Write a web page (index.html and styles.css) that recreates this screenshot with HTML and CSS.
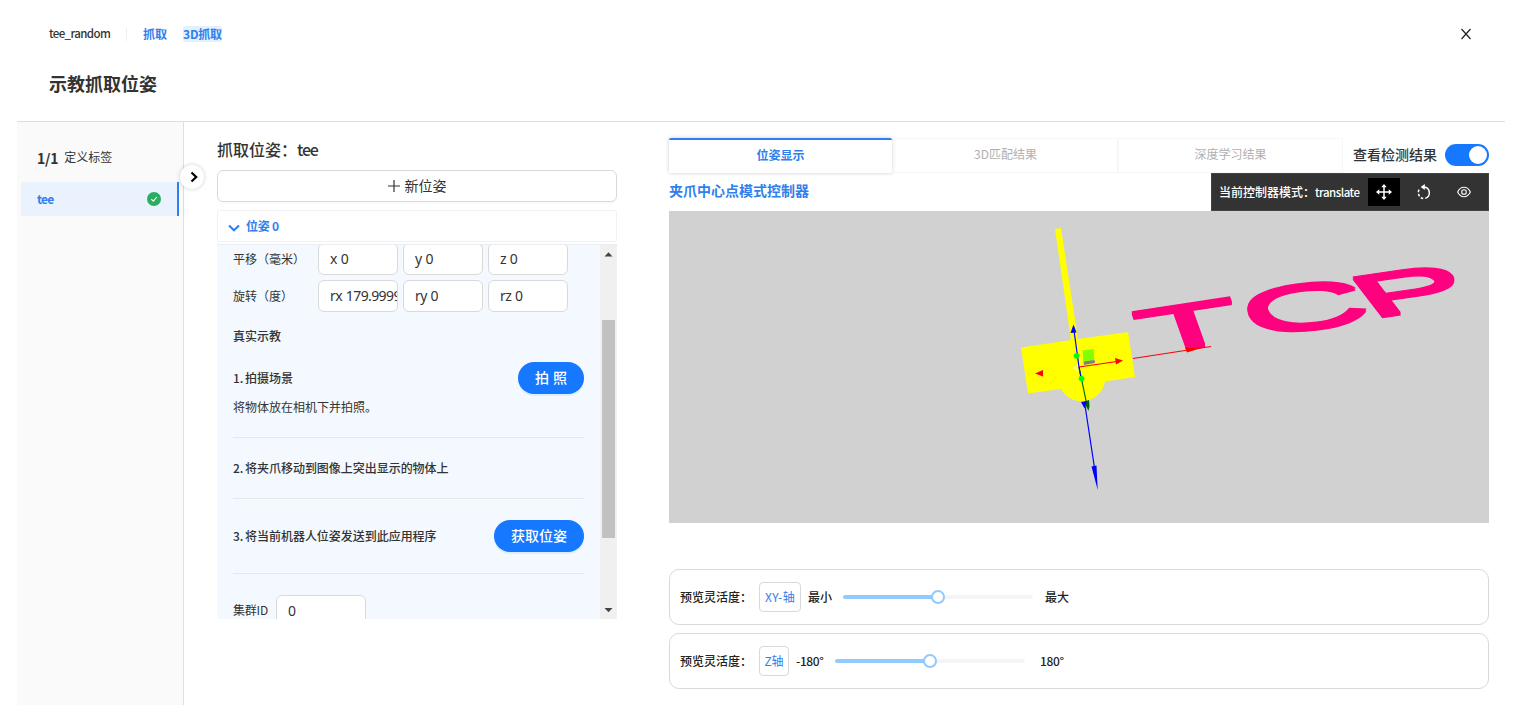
FILE: index.html
```html
<!DOCTYPE html>
<html lang="zh-CN">
<head>
<meta charset="utf-8">
<title>示教抓取位姿</title>
<link rel="stylesheet" href="styles.css">
</head>
<body>
<div class="page">
  <header class="header">
    <div class="crumbs">
      <span class="project">tee_random</span>
      <span class="crumb">抓取</span>
      <span class="crumb crumb-active">3D抓取</span>
      <svg class="close" viewBox="0 0 12 12"><path d="M1.5 1l9 10M10.5 1l-9 10"/></svg>
    </div>
    <h1 class="title">示教抓取位姿</h1>
  </header>
  <div class="body">
    <aside class="sidebar">
      <div class="step"><b>1/1</b><span>定义标签</span></div>
      <div class="label-item">
        <span>tee</span>
        <svg class="check" viewBox="0 0 14 14"><circle cx="7" cy="7" r="7"/><path d="M4.3 7.1l2 2 3.5-4"/></svg>
      </div>
      <div class="expander"><svg viewBox="0 0 10 12"><path d="M2.5 1.5L7.2 6 2.5 10.5"/></svg></div>
    </aside>

    <section class="poses">
      <h2 class="poses-title">抓取位姿：<span class="tag-name">tee</span></h2>
      <div class="new-pose"><svg viewBox="0 0 12 12"><path d="M6 0v12M0 6h12"/></svg><span>新位姿</span></div>
      <div class="pose-head"><svg viewBox="0 0 12 8"><path d="M1 1.5l5 4.8 5-4.8"/></svg><span>位姿 0</span></div>
      <div class="panel">
        <div class="panel-content">
          <div class="fields">
            <span class="field-name">平移（毫米）</span>
            <span class="input">x 0</span><span class="input">y 0</span><span class="input">z 0</span>
          </div>
          <div class="fields">
            <span class="field-name">旋转（度）</span>
            <span class="input">rx 179.9999</span><span class="input">ry 0</span><span class="input">rz 0</span>
          </div>
          <div class="section-title">真实示教</div>
          <div class="task task-one">
            <div class="task-row"><b>1. 拍摄场景</b><span class="pill pill-short">拍 照</span></div>
            <p class="hint">将物体放在相机下并拍照。</p>
          </div>
          <div class="task task-two"><b>2. 将夹爪移动到图像上突出显示的物体上</b></div>
          <div class="task task-three"><b>3. 将当前机器人位姿发送到此应用程序</b><span class="pill">获取位姿</span></div>
          <div class="cluster"><span class="cluster-name">集群ID</span><span class="input">0</span></div>
        </div>
        <div class="scrollbar">
          <svg viewBox="0 0 17 17"><path d="M4.5 11.5h8l-4-4.2z"/></svg>
          <div class="track"><div class="thumb"></div></div>
          <svg viewBox="0 0 17 17"><path d="M4.5 6h8l-4 4.2z"/></svg>
        </div>
      </div>
    </section>

    <section class="viewer">
      <div class="tabs">
        <div class="tab tab-active">位姿显示</div>
        <div class="tab">3D匹配结果</div>
        <div class="tab">深度学习结果</div>
        <span class="switch-label">查看检测结果</span>
        <span class="switch"></span>
      </div>
      <div class="mode-row">
        <span class="mode-title">夹爪中心点模式控制器</span>
        <div class="toolbar">
          <span class="mode-text">当前控制器模式：<span class="mode-name">translate</span></span>
          <span class="tool tool-active"><svg viewBox="0 0 16 16"><path d="M8 2v12M2 8h12"/><path class="fill" d="M8 0l2.7 3.3H5.3zM8 16l2.7-3.3H5.3zM0 8l3.3-2.7v5.4zM16 8l-3.3-2.7v5.4z"/></svg></span>
          <span class="tool"><svg viewBox="0 0 16 16"><path d="M8 2.9a5.9 5.9 0 0 1 1.2 11.5"/><path class="dash" d="M7.2 14.5A5.9 5.9 0 0 1 3.6 5"/><path class="fill" d="M8.8 0v6L4.7 3z"/></svg></span>
          <span class="tool"><svg class="thin" viewBox="0 0 16 16"><path d="M1.600 8C4.800 1.700 11.200 1.700 14.400 8 11.200 14.300 4.800 14.300 1.600 8z"/><circle cx="8" cy="8" r="2.300"/></svg></span>
        </div>
      </div>
      <svg class="scene" viewBox="669 211 820 312">
        <path fill="#ff0" d="M1055 229l6-1 17 111 50-7 7 45-30 4.500a23.600 23.600 0 0 1-44 7.500l-33 4.500-7-46 50-7.500z"/>
        <g class="scene-text">
          <text transform="matrix(1.680 -.255 .210 .590 1144.300 354.800)">T</text>
          <text transform="matrix(1.720 -.230 .280 .610 1251.500 337.300)">C</text>
          <text transform="matrix(1.650 -.240 .420 .550 1370 318.500)">P</text>
        </g>
        <path fill="#ffff4d" d="M1072 368l8-6v11z"/>
        <path fill="#80ff00" d="M1082.500 350.500l11-1.500 1 11-11 1.500z"/>
        <path fill="#808080" d="M1083.500 361.500l11-1.500.5 3-11 2z"/>
        <path class="axis red" d="M1079 367l38-5.500M1133 358.500l78-12"/>
        <path fill="#f00" d="M1115 358l8 2.500-7 4zM1035 373.500l8-3.500v6.500zM1185 347.500l10 .5 11-1.500-19 6z"/>
        <path class="axis" stroke="#006400" d="M1079 367l7.500 36"/>
        <path fill="#006400" d="M1084 402l5-2 .5 6-1 5z"/>
        <path class="axis blue" d="M1073.500 327l5.500 40 2 11M1084.500 402l10 66"/>
        <path fill="#00f" d="M1070.500 333l3-8.500 3 8zM1081 402l6-1-2.500 7.500zM1091.500 466.500l5-1 1.200 24.500z"/>
        <circle cx="1076.500" cy="356" r="2.800" fill="#0f0"/>
        <circle cx="1081.500" cy="378.500" r="2.800" fill="#0f0"/>
      </svg>
      <div class="preview">
        <span class="preview-label">预览灵活度：</span><span class="axis-tag axis-xy">XY-轴</span><span class="min">最小</span>
        <span class="slider"><i></i></span><span class="max">最大</span>
      </div>
      <div class="preview preview-z">
        <span class="preview-label">预览灵活度：</span><span class="axis-tag">Z轴</span><span class="min">-180°</span>
        <span class="slider"><i></i></span><span class="max">180°</span>
      </div>
    </section>
  </div>
</div>
</body>
</html>
```

FILE: styles.css
```css
* { box-sizing: border-box; }
body {
  margin: 0;
  background: #fff;
  color: #333;
  font: 12px/20px "Noto Sans CJK SC", sans-serif;
}
b, h1, h2 { font-weight: 500; }
h1, h2, p { margin: 0; }
svg { display: block; flex: none; fill: none; }
.page { width: 1523px; height: 725px; padding: 0 18px 20px 17px; overflow: hidden; display: flex; flex-direction: column; }
.header { height: 122px; padding: 24px 32px 0; border-bottom: 1px solid #dedede; }
.crumbs { display: flex; align-items: center; height: 20px; }
.project { width: 78px; border-right: 1px solid #eee; line-height: 11px; height: 13px; font-size: 11.5px; font-weight: 500; letter-spacing: -.6px; }
.crumb { margin-left: 16px; color: #2f80ed; font-weight: 700; line-height: 16px; }
.crumb-active { background: #e5f0fd; border-radius: 2px; height: 16px; line-height: 15px; letter-spacing: -.2px; }
.close { width: 12px; height: 12px; margin-left: auto; margin-right: 1px; stroke: #222; stroke-width: 1.2; }
.title { margin-top: 25px; font-size: 18px; line-height: 28px; font-weight: 700; }
.body { flex: 1; display: flex; min-height: 0; }

.sidebar { position: relative; width: 167px; background: #fafafa; border-right: 1px solid #dedede; padding-top: 25px; }
.step { height: 20px; padding-left: 20px; display: flex; align-items: center; gap: 6px; }
.step b { font-size: 14px; font-weight: 700; letter-spacing: -.2px; position: relative; top: 1px; }
.label-item { display: flex; justify-content: space-between; align-items: center; width: 158px; height: 34px; margin: 15px 0 0 4px; padding: 0 16px; background: #e9f2fd; border-right: 2px solid #2f80ed; color: #2f80ed; font-weight: 700; letter-spacing: -.8px; }
.check { width: 14px; height: 14px; fill: #27ae60; }
.check path { fill: none; stroke: #fff; stroke-width: 1.1; }
.expander { position: absolute; z-index: 2; left: 163px; top: 43px; width: 24px; height: 24px; border-radius: 50%; background: #fff; box-shadow: 0 0 4px #0003; display: flex; align-items: center; justify-content: center; padding-left: 3px; }
.expander svg { width: 10px; height: 12px; stroke: #000; stroke-width: 2.200; }

.poses { width: 400px; margin-left: 33px; padding-top: 16px; }
.poses-title { font-size: 16px; line-height: 23px; height: 24px; }
.tag-name { letter-spacing: -1.2px; }
.new-pose { margin-top: 8px; height: 32px; border: 1px solid #d9d9d9; border-radius: 6px; display: flex; justify-content: center; align-items: center; gap: 5px; font-size: 14px; box-shadow: 0 2px 0 #00000005; }
.new-pose span { padding-bottom: 2px; }
.new-pose svg { width: 12px; height: 12px; stroke: #333; stroke-width: 1.200; }
.pose-head { margin-top: 8px; height: 32px; border: 1px solid #f2f2f2; border-radius: 2px; display: flex; align-items: center; gap: 6px; padding: 0 10px; color: #2f80ed; font-weight: 700; letter-spacing: -.2px; }
.pose-head svg { width: 12px; height: 8px; stroke: #2f80ed; stroke-width: 2; margin-top: 4px; }
.panel { margin-top: 2px; height: 375px; display: flex; overflow: hidden; background: #f3f9fe; border-top: 1px solid #eaeef2; }
.panel-content { width: 383px; padding: 0 16px; margin-top: -2px; }
.fields { display: flex; gap: 5px; height: 32px; margin-bottom: 5px; }
.field-name { width: 80px; line-height: 31px; white-space: nowrap; }
.input { width: 80px; height: 32px; border: 1px solid #d9d9d9; border-radius: 6px; background: #fff; padding-left: 11px; font: 14px/30px "Noto Sans", sans-serif; letter-spacing: -.6px; word-spacing: .8px; white-space: nowrap; overflow: hidden; }
.section-title { margin-top: 14px; line-height: 20px; font-weight: 500; }
.task { border-bottom: 1px solid #e3e8ed; }
.task b { word-spacing: -1px; letter-spacing: -.03px; }
.task-one { height: 92px; padding-top: 16px; }
.task-row, .task-three { display: flex; align-items: center; justify-content: space-between; }
.task-row { height: 32px; }
.hint { margin-top: 3px; line-height: 19px; }
.task-two { height: 61px; line-height: 60px; }
.task-three { height: 75px; }
.pill { width: 90px; height: 32px; text-align: center; border-radius: 16px; background: #1677ff; color: #fff; font-size: 14px; line-height: 31px; font-weight: 500; box-shadow: 0 2px 0 #0591ff1a; }
.pill-short { width: 66px; word-spacing: 1px; }
.cluster { display: flex; margin-top: 21px; line-height: 30px; white-space: nowrap; }
.cluster-name { width: 43px; letter-spacing: -.2px; }
.cluster .input { width: 90px; }
.scrollbar { width: 17px; background: #f0f0f0; display: flex; flex-direction: column; }
.scrollbar svg { width: 17px; height: 17px; fill: #444; }
.track { flex: 1; padding: 58px 2px 0; }
.thumb { height: 218px; background: #c1c1c1; }

.viewer { width: 820px; margin-left: 52px; padding-top: 16px; }
.tabs { display: flex; height: 35px; }
.tab { width: 225px; height: 35px; border: 1px solid #f7f7f7; text-align: center; line-height: 30px; color: #b0b0b0; }
.tab-active { width: 223px; margin-right: 1px; border: 0; border-top: 2px solid #2f80ed; border-radius: 2px; box-shadow: 0 0 4px #0003; background: #fff; color: #2f80ed; font-weight: 700; line-height: 30px; }
.switch-label { margin-left: 10px; width: 84px; font-size: 14px; line-height: 32px; font-weight: 500; white-space: nowrap; }
.switch { width: 44px; height: 22px; margin: 6px 0 0 8px; border-radius: 11px; background: #1677ff; padding: 2px 2px 2px 24px; }
.switch::before { content: ""; display: block; width: 18px; height: 18px; border-radius: 50%; background: #fff; }
.mode-row { display: flex; justify-content: space-between; height: 38px; }
.mode-title { font-size: 14px; line-height: 35px; color: #2f80ed; font-weight: 700; }
.toolbar { width: 278px; height: 38px; background: #333; border: 1px solid #444; padding: 4px; display: flex; color: #fff; }
.mode-text { width: 152px; flex: none; padding-left: 3px; line-height: 28px; font-weight: 500; white-space: nowrap; }
.mode-name { font-size: 11.5px; letter-spacing: -.5px; }
.tool { width: 32px; height: 28px; margin-right: 8px; display: flex; justify-content: center; align-items: center; flex: none; }
.tool-active { background: #000; }
.tool svg { width: 16px; height: 16px; stroke: #fff; stroke-width: 1.500; }
.tool .thin { stroke-width: 1.100; }
.tool .fill { fill: #fff; stroke: none; }
.tool .dash { stroke-dasharray: 2.600 1.700; }
.scene { width: 820px; height: 312px; background: #d1d1d1; margin-bottom: 46px; }
.scene-text {
  font: 400 100px "Liberation Sans", sans-serif;
  fill: #ff007f;
  stroke: #ff007f;
  stroke-width: 2px;
  filter: drop-shadow(0 1.5px 0 #ff007f) drop-shadow(0 -1.5px 0 #ff007f);
}
.axis { stroke-width: 1.200; }
.red { stroke: #f00; }
.blue { stroke: #00f; }
.preview { display: flex; align-items: center; height: 56px; margin-bottom: 8px; padding-left: 10px; border: 1px solid #d9d9d9; border-radius: 10px; font-weight: 500; color: #222; white-space: nowrap; }
.preview-label { width: 79px; }
.axis-tag { width: 30px; height: 30px; text-align: center; border: 1px solid #d9d9d9; border-radius: 4px; color: #2f80ed; font-weight: 400; line-height: 28px; margin-right: 7px; }
.axis-xy { width: 42px; letter-spacing: .4px; }
.min { width: 24px; }
.slider { width: 190px; height: 4px; border-radius: 2px; background: linear-gradient(90deg, #91caff 50%, #f5f5f5 50%); margin: 0 12px 0 11px; display: flex; justify-content: center; align-items: center; }
.slider i { width: 14px; height: 14px; flex: none; border: 2px solid #91caff; border-radius: 50%; background: #fff; }
.preview-z .min { width: 28px; letter-spacing: -.4px; }
.preview-z .max { margin-left: 3px; letter-spacing: -.3px; }
```
